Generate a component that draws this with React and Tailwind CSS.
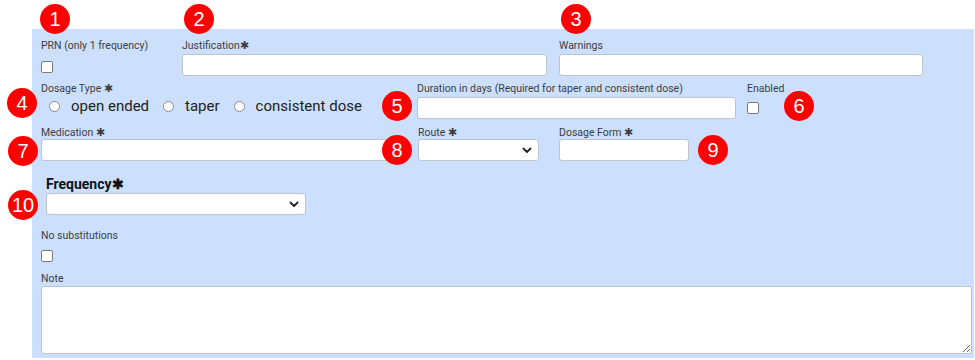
const Badge = ({ n, className }) => (
  <div
    className={`absolute w-[30px] h-[30px] rounded-full bg-[#fe0000] text-white flex items-center justify-center text-[20px] leading-none font-['Liberation_Sans',Arial,sans-serif] ${className}`}
  >
    {n}
  </div>
);

const Label = ({ children, className = '' }) => (
  <div className={`text-[10.5px] leading-[13px] text-[#3d3d3d] whitespace-nowrap ${className}`}>{children}</div>
);

const Input = ({ className = '' }) => (
  <div className={`h-[22px] bg-white border border-[#bcc3cc] rounded-[3px] ${className}`} />
);

const Select = ({ className = '' }) => (
  <div className={`h-[22px] bg-white border border-[#bcc3cc] rounded-[3px] flex items-center justify-end pr-[6px] ${className}`}>
    <svg width="10" height="7" viewBox="0 0 10 7" fill="none">
      <path d="M1.5 1.5 L5 5 L8.5 1.5" stroke="#222" strokeWidth="1.8" strokeLinecap="round" strokeLinejoin="round" />
    </svg>
  </div>
);

const Check = ({ className = '' }) => (
  <div className={`w-[12px] h-[12px] bg-white border border-[#7a7a7a] rounded-[2px] ${className}`} />
);

const Radio = ({ label }) => (
  <div className="flex items-center">
    <div className="w-[11px] h-[11px] rounded-full bg-white border border-[#8a8a8a]" />
    <span className="ml-[11px] text-[15px] leading-[18px] text-[#222]">{label}</span>
  </div>
);

export default function App() {
  return (
    <div className="relative w-[975px] h-[360px] bg-white overflow-hidden font-['Roboto','Liberation_Sans',sans-serif]">
      <div className="ml-[32px] mt-[29px] w-[942px] h-[329px] bg-[#cce0fd] pl-[9px] pt-[10px]">
        {/* row 1 */}
        <div className="flex">
          <div className="w-[141px]">
            <Label>PRN (only 1 frequency)</Label>
            <Check className="mt-[9px]" />
          </div>
          <div className="w-[377px]">
            <Label>Justification✱</Label>
            <Input className="mt-[2px] w-[365px]" />
          </div>
          <div>
            <Label>Warnings</Label>
            <Input className="mt-[2px] w-[364px]" />
          </div>
        </div>

        {/* row 2 */}
        <div className="flex mt-[6px]">
          <div className="w-[376px]">
            <Label>Dosage Type ✱</Label>
            <div className="flex items-center gap-[14px] mt-[2px] pl-[8px]">
              <Radio label="open ended" />
              <Radio label="taper" />
              <Radio label="consistent dose" />
            </div>
          </div>
          <div className="w-[330px]">
            <Label>Duration in days (Required for taper and consistent dose)</Label>
            <Input className="mt-[2px] w-[319px]" />
          </div>
          <div>
            <Label>Enabled</Label>
            <Check className="mt-[7px]" />
          </div>
        </div>

        {/* row 3 */}
        <div className="flex mt-[7px]">
          <div className="w-[377px]">
            <Label>Medication ✱</Label>
            <Input className="w-[354px]" />
          </div>
          <div className="w-[141px]">
            <Label>Route ✱</Label>
            <Select className="w-[121px]" />
          </div>
          <div>
            <Label>Dosage Form ✱</Label>
            <Input className="w-[130px]" />
          </div>
        </div>

        {/* frequency */}
        <div className="mt-[15px] pl-[5px]">
          <div className="text-[14px] leading-[17px] font-bold text-[#111]">Frequency✱</div>
          <Select className="w-[260px]" />
        </div>

        {/* no substitutions */}
        <div className="mt-[14px]">
          <Label>No substitutions</Label>
          <Check className="mt-[8px]" />
        </div>

        {/* note */}
        <div className="mt-[10px]">
          <Label>Note</Label>
          <textarea className="mt-[1px] block w-[931px] h-[68px] bg-white border border-[#bcc3cc] rounded-[3px] outline-none" />
        </div>
      </div>

      <Badge n="1" className="left-[40px] top-[4px]" />
      <Badge n="2" className="left-[184px] top-[4px]" />
      <Badge n="3" className="left-[561px] top-[4px]" />
      <Badge n="4" className="left-[7px] top-[88px]" />
      <Badge n="5" className="left-[382px] top-[91px]" />
      <Badge n="6" className="left-[784px] top-[91px]" />
      <Badge n="7" className="left-[8px] top-[136px]" />
      <Badge n="8" className="left-[382px] top-[135px]" />
      <Badge n="9" className="left-[698px] top-[135px]" />
      <Badge n="10" className="left-[8px] top-[190px]" />
    </div>
  );
}
